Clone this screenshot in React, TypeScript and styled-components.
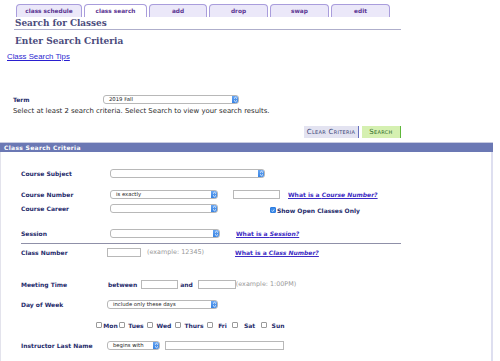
import React from 'react';
import styled, { createGlobalStyle } from 'styled-components';

const GlobalStyle = createGlobalStyle`
  body {
    margin: 0;
    background: #ffffff;
    font-family: "DejaVu Sans", Verdana, sans-serif;
    color: #222;
  }
`;

const tabs = [
  { label: 'class schedule', w: 66 },
  { label: 'class search', w: 63, active: true },
  { label: 'add', w: 58 },
  { label: 'drop', w: 59 },
  { label: 'swap', w: 59 },
  { label: 'edit', w: 59 },
];

const days = [
  { label: 'Mon', w: 17 },
  { label: 'Tues', w: 22 },
  { label: 'Wed', w: 22 },
  { label: 'Thurs', w: 26 },
  { label: 'Fri', w: 19 },
  { label: 'Sat', w: 23 },
  { label: 'Sun', w: 22 },
];

function Select({ w, value }: { w: number; value?: string }) {
  return (
    <SelectBox $w={w}>
      <SelectValue>{value}</SelectValue>
      <SelectArrow>
        <svg width="5" height="7" viewBox="0 0 5 7">
          <path d="M1 2.6 L2.5 1.2 L4 2.6 M1 4.4 L2.5 5.8 L4 4.4" stroke="#fff" strokeWidth="0.9" fill="none" />
        </svg>
      </SelectArrow>
    </SelectBox>
  );
}

function App() {
  return (
    <Page>
      <GlobalStyle />
      <TabBar>
        {tabs.map((t) => (
          <Tab key={t.label} $w={t.w} $active={!!t.active}>
            {t.label}
          </Tab>
        ))}
      </TabBar>
      <PageTitle>Search for Classes</PageTitle>
      <SubTitle>Enter Search Criteria</SubTitle>
      <TipsLink href="#">Class Search Tips</TipsLink>

      <TermRow>
        <TermLabel>Term</TermLabel>
        <Select w={136} value="2019 Fall" />
      </TermRow>
      <Instructions>
        Select at least 2 search criteria. Select Search to view your search results.
      </Instructions>

      <ButtonRow>
        <ClearButton>Clear Criteria</ClearButton>
        <SearchButton>Search</SearchButton>
      </ButtonRow>

      <Panel>
        <PanelHeader>Class Search Criteria</PanelHeader>
        <PanelBody>
          <Row $mt={0}>
            <Label $w={89}>Course Subject</Label>
            <Select w={155} />
          </Row>
          <Row $mt={11}>
            <Label $w={89}>Course Number</Label>
            <Select w={108} value="is exactly" />
            <TextInput $w={47} $ml={15} />
            <HelpLink $ml={8}>
              What is a <em>Course Number?</em>
            </HelpLink>
          </Row>
          <Row $mt={4}>
            <Label $w={89}>Course Career</Label>
            <Select w={108} />
            <CheckRow $ml={52}>
              <Check $checked>
                <svg width="5" height="5" viewBox="0 0 5 5">
                  <path d="M1 2.6 L2.1 3.7 L4 1.2" stroke="#fff" strokeWidth="0.9" fill="none" />
                </svg>
              </Check>
              <BoldText>Show Open Classes Only</BoldText>
            </CheckRow>
          </Row>
          <Row $mt={15}>
            <Label $w={89}>Session</Label>
            <Select w={110} />
            <HelpLink $ml={16}>
              What is a <em>Session?</em>
            </HelpLink>
          </Row>
          <Divider />
          <Row $mt={3}>
            <Label $w={86}>Class Number</Label>
            <TextInput $w={34} $ml={0} />
            <Hint $ml={6}>(example: 12345)</Hint>
            <HelpLink $ml={31}>
              What is a <em>Class Number?</em>
            </HelpLink>
          </Row>
          <Row $mt={22}>
            <Label $w={87}>Meeting Time</Label>
            <BoldText>between</BoldText>
            <TextInput $w={37} $ml={4} />
            <BoldText $ml={2}>and</BoldText>
            <TextInput $w={38} $ml={5} />
            <Hint $ml={0}>(example: 1:00PM)</Hint>
          </Row>
          <Row $mt={10}>
            <Label $w={86}>Day of Week</Label>
            <Select w={111} value="include only these days" />
          </Row>
          <DayRow>
            {days.map((d) => (
              <Day key={d.label}>
                <Check />
                <DayLabel $w={d.w}>{d.label}</DayLabel>
              </Day>
            ))}
          </DayRow>
          <Row $mt={10}>
            <Label $w={86}>Instructor Last Name</Label>
            <Select w={53} value="begins with" />
            <TextInput $w={119} $ml={5} />
          </Row>
        </PanelBody>
      </Panel>
    </Page>
  );
}

const Page = styled.div`
  width: 500px;
  height: 361px;
  overflow: hidden;
`;

const TabBar = styled.div`
  display: flex;
  gap: 2px;
  padding: 4px 0 0 16px;
  height: 13px;
`;

const Tab = styled.div<{ $w: number; $active: boolean }>`
  width: ${(p) => p.$w}px;
  box-sizing: border-box;
  height: 13px;
  border: 1px solid #a99ddc;
  border-bottom: none;
  border-radius: 4px 4px 0 0;
  background: ${(p) => (p.$active ? '#ffffff' : '#ebe8f9')};
  color: #5b3592;
  font-size: 5.8px;
  font-weight: bold;
  display: flex;
  align-items: center;
  justify-content: center;
`;

const PageTitle = styled.div`
  margin-left: 14px;
  width: 386px;
  height: 12px;
  line-height: 12px;
  padding-left: 1px;
  box-sizing: content-box;
  border-bottom: 1.5px solid #aeaecb;
  font-family: "DejaVu Serif", Georgia, serif;
  font-weight: bold;
  font-size: 8.9px;
  color: #4b4b7c;
`;

const SubTitle = styled.div`
  margin: 4px 0 0 15px;
  height: 14px;
  line-height: 14px;
  font-family: "DejaVu Serif", Georgia, serif;
  font-weight: bold;
  font-size: 9px;
  color: #4b4b7c;
`;

const TipsLink = styled.a`
  display: block;
  width: fit-content;
  margin: 4px 0 0 7px;
  height: 10px;
  line-height: 10px;
  font-family: "Liberation Sans", Arial, sans-serif;
  font-size: 7.8px;
  color: #2a1fd0;
  text-decoration: underline;
`;

const TermRow = styled.div`
  display: flex;
  align-items: center;
  margin: 32px 0 0 13px;
  height: 10px;
`;

const TermLabel = styled.div`
  width: 90px;
  font-size: 6px;
  font-weight: bold;
  color: #1f2c6b;
`;

const Instructions = styled.div`
  margin: 2px 0 0 13px;
  height: 10px;
  line-height: 10px;
  font-size: 6.9px;
  color: #2a2a2a;
`;

const ButtonRow = styled.div`
  display: flex;
  gap: 3px;
  margin: 10px 0 0 304px;
  height: 12px;
`;

const ButtonBase = styled.button`
  height: 12px;
  box-sizing: border-box;
  padding: 0;
  border: none;
  font-family: "DejaVu Sans", Verdana, sans-serif;
  font-variant: small-caps;
  font-size: 7px;
  letter-spacing: 0.3px;
  display: flex;
  align-items: center;
  justify-content: center;
`;

const ClearButton = styled(ButtonBase)`
  width: 55px;
  background: #e3e3f1;
  border-right: 1.5px solid #6670bd;
  color: #3a4577;
`;

const SearchButton = styled(ButtonBase)`
  width: 39px;
  background: #d5f0b1;
  border-right: 1.5px solid #5fb73a;
  color: #2f6a2a;
`;

const Panel = styled.div`
  margin-top: 4px;
  width: 493px;
`;

const PanelHeader = styled.div`
  height: 10px;
  line-height: 10px;
  background: #6b78b4;
  border-top: 1px solid #c8cbe0;
  box-sizing: border-box;
  padding-left: 4px;
  color: #ffffff;
  font-size: 6px;
  font-weight: bold;
  letter-spacing: 0.3px;
`;

const PanelBody = styled.div`
  border-left: 1px solid #e3e3ec;
  border-right: 2px solid #dedff0;
  padding: 16px 0 20px 0;
  box-sizing: border-box;
`;

const Row = styled.div<{ $mt: number }>`
  display: flex;
  align-items: center;
  height: 10px;
  margin-top: ${(p) => p.$mt}px;
  padding-left: 20px;
`;

const Label = styled.div<{ $w: number }>`
  width: ${(p) => p.$w}px;
  flex-shrink: 0;
  font-size: 6px;
  font-weight: bold;
  color: #1f2c6b;
`;

const SelectBox = styled.div<{ $w: number }>`
  width: ${(p) => p.$w}px;
  height: 9px;
  box-sizing: border-box;
  border: 1px solid #b8b8b8;
  border-radius: 3px;
  background: #ffffff;
  display: flex;
  align-items: center;
  overflow: hidden;
  flex-shrink: 0;
`;

const SelectValue = styled.span`
  flex: 1;
  padding-left: 5px;
  font-size: 5.3px;
  color: #222;
  white-space: nowrap;
`;

const SelectArrow = styled.span`
  width: 7px;
  height: 9px;
  margin: -1px -1px -1px 0;
  border-radius: 0 3px 3px 0;
  background: linear-gradient(#6eaaf4, #2f7de0);
  display: flex;
  align-items: center;
  justify-content: center;
`;

const TextInput = styled.div<{ $w: number; $ml: number }>`
  width: ${(p) => p.$w}px;
  height: 9px;
  margin-left: ${(p) => p.$ml}px;
  box-sizing: border-box;
  border: 1px solid #b8b8b8;
  background: #ffffff;
  flex-shrink: 0;
`;

const HelpLink = styled.a<{ $ml: number }>`
  margin-left: ${(p) => p.$ml}px;
  font-size: 6px;
  font-weight: bold;
  color: #3d2bc4;
  text-decoration: underline;
  white-space: nowrap;

  em {
    font-style: italic;
  }
`;

const Hint = styled.span<{ $ml: number }>`
  margin-left: ${(p) => p.$ml}px;
  font-size: 6.4px;
  color: #9a9a9a;
  white-space: nowrap;
`;

const BoldText = styled.span<{ $ml?: number }>`
  margin-left: ${(p) => p.$ml ?? 0}px;
  font-size: 6px;
  font-weight: bold;
  color: #1f2c6b;
  white-space: nowrap;
`;

const CheckRow = styled.div<{ $ml: number }>`
  display: flex;
  align-items: center;
  gap: 1px;
  margin-left: ${(p) => p.$ml}px;
  padding-top: 4px;
`;

const Check = styled.span<{ $checked?: boolean }>`
  width: 6px;
  height: 6px;
  box-sizing: border-box;
  border: 1px solid ${(p) => (p.$checked ? '#2f7de0' : '#9a9a9a')};
  border-radius: 1px;
  background: ${(p) => (p.$checked ? '#3d8ce8' : '#ffffff')};
  display: flex;
  align-items: center;
  justify-content: center;
  flex-shrink: 0;
`;

const Divider = styled.div`
  margin: 5px 0 0 20px;
  width: 380px;
  height: 1px;
  background: #8f90a8;
`;

const DayRow = styled.div`
  display: flex;
  align-items: center;
  height: 10px;
  margin-top: 11px;
  padding-left: 95px;
`;

const Day = styled.div`
  display: flex;
  align-items: center;
`;

const DayLabel = styled.span<{ $w: number }>`
  width: ${(p) => p.$w}px;
  text-align: center;
  font-size: 6px;
  font-weight: bold;
  color: #1f2c6b;
`;

export default App;
